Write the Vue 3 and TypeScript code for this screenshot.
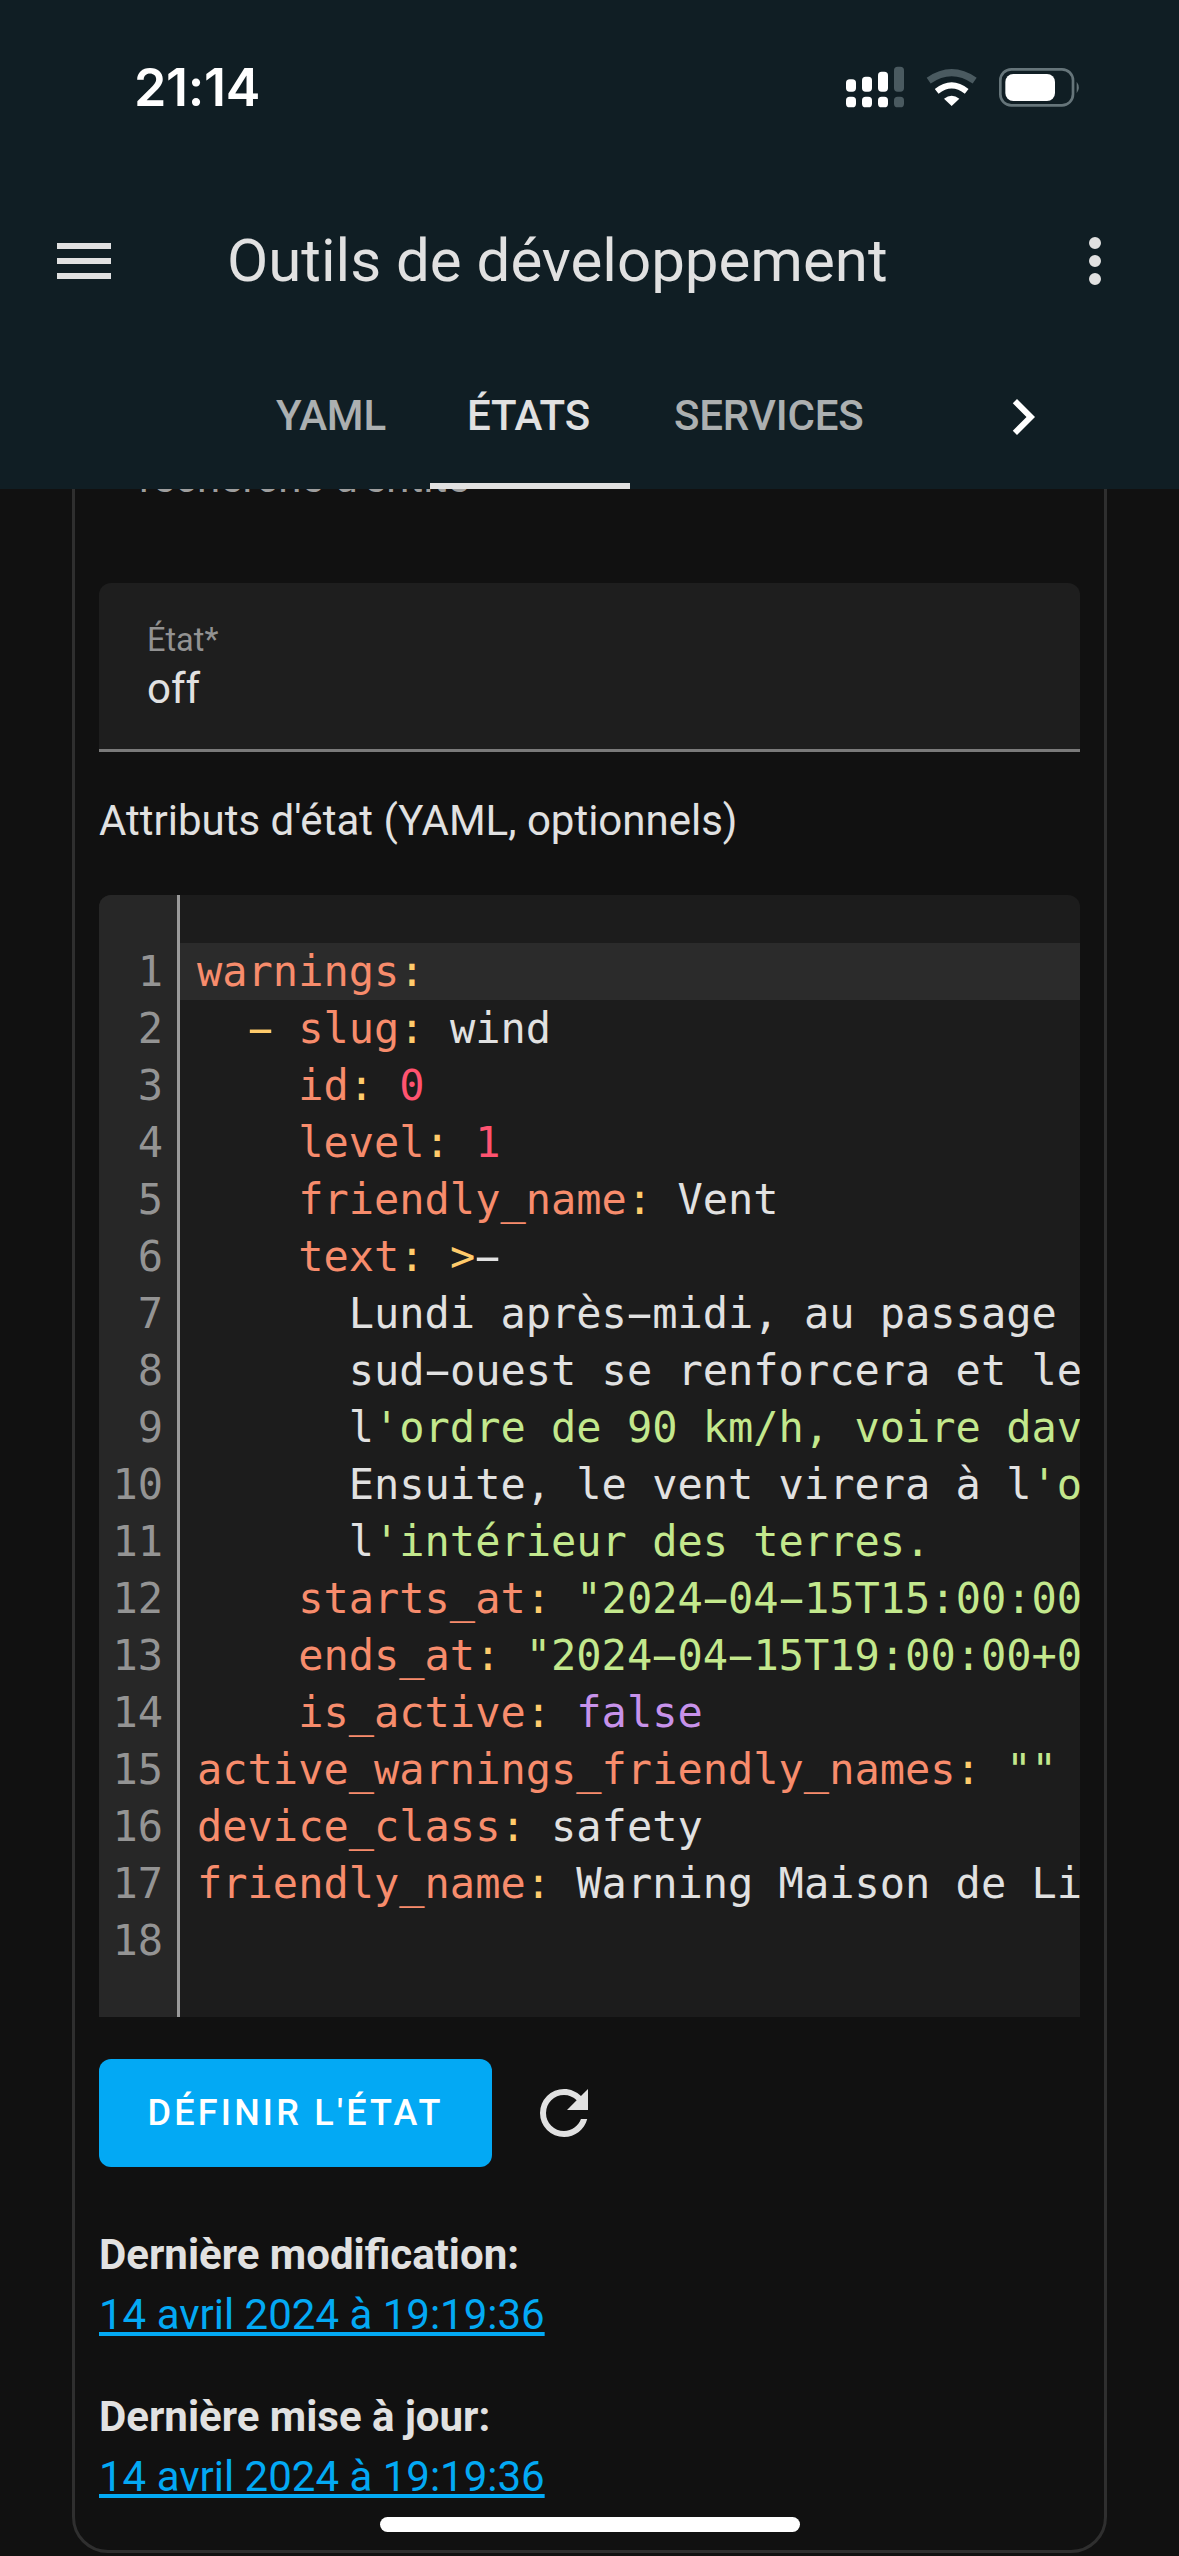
<script setup lang="ts">
type Tok = { t: string; c: string }
const k = (t: string): Tok => ({ t, c: 'k' })
const p = (t: string): Tok => ({ t, c: 'p' })
const w = (t: string): Tok => ({ t, c: 'w' })
const n = (t: string): Tok => ({ t, c: 'n' })
const s = (t: string): Tok => ({ t, c: 's' })
const b = (t: string): Tok => ({ t, c: 'b' })

const lines: Tok[][] = [
  [k('warnings'), p(':')],
  [w('  '), p('-'), w(' '), k('slug'), p(':'), w(' wind')],
  [w('    '), k('id'), p(':'), w(' '), n('0')],
  [w('    '), k('level'), p(':'), w(' '), n('1')],
  [w('    '), k('friendly_name'), p(':'), w(' Vent')],
  [w('    '), k('text'), p(':'), w(' '), p('>'), w('-')],
  [w('      Lundi après-midi, au passage')],
  [w('      sud-ouest se renforcera et le')],
  [w('      l'), s("'ordre de 90 km/h, voire dav")],
  [w('      Ensuite, le vent virera à l'), s("'o")],
  [w('      l'), s("'intérieur des terres.")],
  [w('    '), k('starts_at'), p(':'), w(' '), s('"2024-04-15T15:00:00')],
  [w('    '), k('ends_at'), p(':'), w(' '), s('"2024-04-15T19:00:00+0')],
  [w('    '), k('is_active'), p(':'), w(' '), b('false')],
  [k('active_warnings_friendly_names'), p(':'), w(' '), s('""')],
  [k('device_class'), p(':'), w(' safety')],
  [k('friendly_name'), p(':'), w(' Warning Maison de Li')],
  [],
]
// The reference's monospace draws a longer hyphen, so hyphens get their own span.
const parts = (text: string): string[] => text.split(/(-)/).filter(Boolean)
const tabs = ['YAML', 'ÉTATS', 'SERVICES']
const stamps = [
  { label: 'Dernière modification:', date: '14 avril 2024 à 19:19:36' },
  { label: 'Dernière mise à jour:', date: '14 avril 2024 à 19:19:36' },
]
</script>

<template>
  <div class="page">
    <header class="top">
      <div class="status">
        <span class="clock">21:14</span>
        <svg class="status-icons" width="280" height="70" viewBox="0 0 840 210">
          <g fill="#fff">
            <rect x="78" y="88" width="30" height="37" rx="11" />
            <rect x="126" y="80" width="30" height="45" rx="11" />
            <rect x="174" y="65" width="30" height="60" rx="11" />
            <rect x="78" y="140" width="30" height="32" rx="11" />
            <rect x="126" y="140" width="30" height="32" rx="11" />
            <rect x="174" y="140" width="30" height="32" rx="11" />
          </g>
          <g fill="#4a5a60">
            <rect x="222" y="50" width="30" height="75" rx="11" />
            <rect x="222" y="140" width="30" height="32" rx="11" />
          </g>
          <path d="M326 92 Q395 44 464 92" fill="none" stroke="#4a5a60" stroke-width="21" />
          <path d="M350 124 Q395 88 440 124" fill="none" stroke="#fff" stroke-width="18" />
          <path d="M372 146 Q395 128 418 146 L395 168 Z" fill="#fff" />
          <rect x="541" y="58" width="218" height="108" rx="33" fill="none" stroke="#66757a" stroke-width="8" />
          <rect x="556" y="72" width="149" height="81" rx="24" fill="#fff" />
          <path d="M770 95 Q783 112 770 130 Z" fill="#66757a" />
        </svg>
      </div>
      <div class="toolbar">
        <svg class="icon" viewBox="0 0 24 24"><path d="M3,6H21V8H3V6M3,11H21V13H3V11M3,16H21V18H3V16Z" /></svg>
        <h1 class="title">Outils de développement</h1>
        <svg class="icon" viewBox="0 0 24 24"><path d="M12,16A2,2 0 0,1 14,18A2,2 0 0,1 12,20A2,2 0 0,1 10,18A2,2 0 0,1 12,16M12,10A2,2 0 0,1 14,12A2,2 0 0,1 12,14A2,2 0 0,1 10,12A2,2 0 0,1 12,10M12,4A2,2 0 0,1 14,6A2,2 0 0,1 12,8A2,2 0 0,1 10,6A2,2 0 0,1 12,4Z" /></svg>
      </div>
      <nav class="tabs">
        <span v-for="(tab, i) in tabs" :key="tab" class="tab" :class="{ active: i === 1 }">{{ tab }}</span>
        <svg class="icon chevron" viewBox="0 0 24 24"><path d="M8.59,16.58L13.17,12L8.59,7.41L10,6L16,12L10,18L8.59,16.58Z" /></svg>
      </nav>
    </header>

    <main class="content">
      <section class="card">
        <p class="peek">recherche d'entité</p>
        <div class="field">
          <label class="field-label">État*</label>
          <div class="field-value">off</div>
        </div>
        <p class="attrs">Attributs d'état (YAML, optionnels)</p>
        <div class="editor">
          <div class="gutter">
            <div v-for="(_, i) in lines" :key="i" class="num">{{ i + 1 }}</div>
          </div>
          <div class="code">
            <div v-for="(line, i) in lines" :key="i" class="line" :class="{ current: i === 0 }">
              <span v-for="(tok, j) in line" :key="j" :class="tok.c"><template v-for="(part, m) in parts(tok.t)" :key="m"><span v-if="part === '-'" class="dash">-</span><template v-else>{{ part }}</template></template></span>
            </div>
          </div>
        </div>
        <div class="actions">
          <button class="primary" type="button">DÉFINIR L'ÉTAT</button>
          <svg class="icon" viewBox="0 0 24 24"><path d="M17.65,6.35C16.2,4.9 14.21,4 12,4A8,8 0 0,0 4,12A8,8 0 0,0 12,20C15.73,20 18.85,17.45 19.74,14H17.65C16.83,16.33 14.61,18 12,18A6,6 0 0,1 6,12A6,6 0 0,1 12,6C13.66,6 15.14,6.69 16.22,7.78L13,11H20V4L17.65,6.35Z" /></svg>
        </div>
        <div v-for="st in stamps" :key="st.label" class="stamp">
          <strong>{{ st.label }}</strong>
          <a href="#">{{ st.date }}</a>
        </div>
      </section>
    </main>
    <div class="home"></div>
  </div>
</template>

<style>
html, body { margin: 0; background: #111111; }
</style>

<style scoped>
.page {
  position: relative;
  width: 1179px;
  height: 2556px;
  overflow: hidden;
  display: flex;
  flex-direction: column;
  background: #111111;
  color: #e1e1e1;
  font-family: Roboto, "Liberation Sans", sans-serif;
}
.top {
  flex: none;
  height: 489px;
  background: #101e24;
  position: relative;
  z-index: 2;
  display: flex;
  flex-direction: column;
}
.status {
  height: 177px;
  display: flex;
  justify-content: space-between;
  position: relative;
  padding-left: 134px;
  box-sizing: border-box;
}
.clock {
  font-family: Inter, sans-serif;
  font-size: 52px;
  font-weight: 600;
  line-height: 60px;
  margin-top: 58px;
  letter-spacing: -0.3px;
  color: #fff;
}
.status-icons {
  margin-top: 50px;
  margin-right: 79px;
}
.toolbar {
  height: 168px;
  display: flex;
  align-items: center;
  padding: 0 48px;
  box-sizing: border-box;
}
.icon {
  flex: none;
  width: 72px;
  height: 72px;
  fill: #e1e1e1;
}
.title {
  flex: 1;
  margin: 0 0 0 107px;
  font-size: 60px;
  font-weight: 400;
  line-height: 72px;
  color: #e1e1e1;
}
.tabs {
  flex: 1;
  display: flex;
  gap: 6px;
  padding-left: 238px;
  align-items: stretch;
}
.tab {
  padding: 6px 38px 0;
  font-size: 42px;
  font-weight: 500;
  line-height: 130px;
  letter-spacing: -0.15px;
  color: rgba(225, 225, 225, 0.75);
  box-sizing: border-box;
  border-bottom: 6px solid transparent;
}
.tab.active {
  padding: 6px 40px 0 37px;
  color: #e1e1e1;
  border-bottom-color: #e1e1e1;
}
.chevron {
  margin-left: auto;
  margin-right: 120px;
  align-self: center;
  fill: #fff;
}
.content {
  flex: 1;
  min-height: 0;
  overflow: hidden;
  position: relative;
}
.card {
  margin: -60px 72px 0;
  height: 2124px;
  box-sizing: border-box;
  border: 3px solid #2f2f2f;
  border-radius: 36px;
  padding: 0 24px;
}
.peek {
  margin: 0 0 0 40px;
  height: 151px;
  box-sizing: border-box;
  padding-top: 16px;
  font-size: 42px;
  line-height: 60px;
  color: #9e9e9e;
}
.field {
  height: 169px;
  box-sizing: border-box;
  background: #1e1e1e;
  border-radius: 12px 12px 0 0;
  border-bottom: 3px solid #7a7a7a;
  padding: 37px 48px 0;
}
.field-label {
  display: block;
  font-size: 32.5px;
  line-height: 40px;
  color: #929292;
}
.field-value {
  font-size: 42px;
  line-height: 58px;
  color: #e1e1e1;
}
.attrs {
  margin: 41px 0 46px;
  font-size: 42px;
  line-height: 56px;
  color: #e1e1e1;
}
.editor {
  display: flex;
  height: 1122px;
  background: #1c1c1c;
  border-radius: 12px 12px 0 0;
  overflow: hidden;
  font-family: "DejaVu Sans Mono", monospace;
  font-size: 42px;
  line-height: 57px;
  padding: 0;
}
.gutter {
  flex: none;
  width: 78px;
  box-sizing: content-box;
  background: #272727;
  border-right: 3px solid #9a9a9a;
  padding-top: 48px;
}
.num {
  height: 57px;
  text-align: right;
  padding-right: 14px;
  color: #949494;
}
.code {
  flex: 1;
  min-width: 0;
  padding-top: 48px;
}
.line {
  height: 57px;
  padding-left: 17px;
  white-space: pre;
  overflow: hidden;
}
.line.current { background: #2b2b2b; }
.dash {
  display: inline-block;
  transform: scaleX(2);
}
.k { color: #f78c6c; }
.p { color: #ffcb6b; }
.w { color: #e1e1e1; }
.n { color: #ff5370; }
.s { color: #c3e88d; }
.b { color: #c792ea; }
.actions {
  display: flex;
  align-items: center;
  gap: 36px;
  margin: 42px 0 58px;
}
.primary {
  width: 393px;
  height: 108px;
  border: 0;
  border-radius: 12px;
  background: #03a9f4;
  color: #fff;
  font-family: inherit;
  font-size: 36px;
  font-weight: 500;
  letter-spacing: 3.2px;
  padding: 0;
}
.stamp {
  margin-bottom: 42px;
  font-size: 42px;
  line-height: 60px;
}
.stamp strong {
  display: block;
  font-weight: 700;
  color: #e1e1e1;
}
.stamp a {
  display: block;
  width: fit-content;
  color: #03a9f4;
}
.home {
  position: absolute;
  left: 380px;
  top: 2517px;
  width: 420px;
  height: 15px;
  border-radius: 8px;
  background: #fff;
}
</style>
